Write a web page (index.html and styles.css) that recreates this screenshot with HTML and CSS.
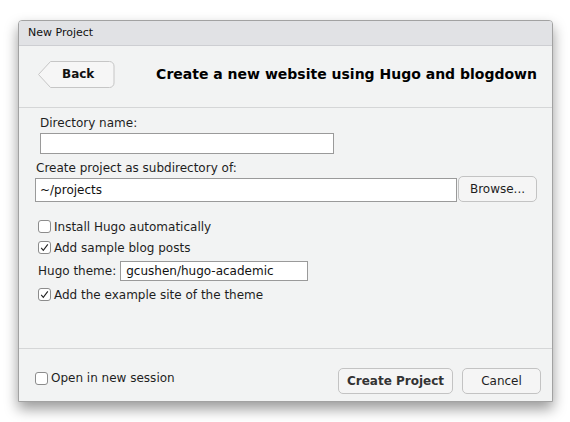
FILE: index.html
```html
<!DOCTYPE html>
<html>
<head>
<meta charset="utf-8">
<link rel="stylesheet" href="styles.css">
</head>
<body>
<div class="dialog">
  <div class="titlebar">New Project</div>
  <div class="header">
    <button class="back">
      <svg class="back-shape" width="77" height="27" viewBox="0 0 77 27"><path d="M12.5 0.5 H71.5 A4.5 4.5 0 0 1 76 5 V22 A4.5 4.5 0 0 1 71.5 26.5 H12.5 L0.5 13.5 Z" fill="#f6f6f6" stroke="#c6c6c6"/></svg>
      <span class="back-label">Back</span>
    </button>
    <h1 class="heading">Create a new website using Hugo and blogdown</h1>
  </div>
  <div class="form">
    <div class="dir-label">Directory name:</div>
    <div class="dir-input input"></div>
    <div class="sub-label">Create project as subdirectory of:</div>
    <div class="sub-row">
      <div class="sub-input input">~/projects</div>
      <button class="btn browse">Browse...</button>
    </div>
    <div class="check-row first"><span class="box"></span><span>Install Hugo automatically</span></div>
    <div class="check-row"><span class="box"><svg width="11" height="11" viewBox="0 0 11 11"><path d="M2.2 5.8 L4.3 8.3 L8.8 2.3" fill="none" stroke="#222" stroke-width="1.1"/></svg></span><span>Add sample blog posts</span></div>
    <div class="theme-row"><span class="theme-label">Hugo theme:</span><div class="theme-input input">gcushen/hugo-academic</div></div>
    <div class="check-row"><span class="box"><svg width="11" height="11" viewBox="0 0 11 11"><path d="M2.2 5.8 L4.3 8.3 L8.8 2.3" fill="none" stroke="#222" stroke-width="1.1"/></svg></span><span>Add the example site of the theme</span></div>
  </div>
  <div class="footer">
    <div class="check-row session"><span class="box"></span><span>Open in new session</span></div>
    <div class="footer-buttons">
      <button class="btn create">Create Project</button>
      <button class="btn cancel">Cancel</button>
    </div>
  </div>
</div>
</body>
</html>
```

FILE: styles.css
```css
* { box-sizing: border-box; }
html, body { height: 100%; }
body {
  margin: 0;
  min-height: 422px;
  padding-top: 20px;
  background: #ffffff;
  font-family: "DejaVu Sans", sans-serif;
  font-size: 12px;
  color: #1e1e1e;
}
.dialog {
  margin: 0 0 0 18px;
  width: 535px;
  height: 382px;
  border: 1px solid #a2a2a2;
  border-radius: 4px 4px 0 0;
  background: #f2f3f3;
  box-shadow: 0 7px 14px rgba(0,0,0,0.4);
  display: flex;
  flex-direction: column;
}
.titlebar {
  height: 25px;
  line-height: 24px;
  background: #e1e2e5;
  border-bottom: 1px solid #cdced2;
  border-radius: 3px 3px 0 0;
  padding-left: 9px;
  font-size: 11px;
  color: #111;
}
.header {
  height: 62px;
  border-bottom: 1px solid #d5d6d7;
  display: flex;
  align-items: flex-start;
  justify-content: space-between;
  padding: 15px 15px 0 19px;
}
.back {
  position: relative;
  width: 77px;
  height: 27px;
  padding: 0;
  border: none;
  background: transparent;
  font-family: inherit;
}
.back-shape { position: absolute; left: 0; top: 0; }
.back-label {
  position: absolute;
  left: 24px;
  top: 0;
  line-height: 27px;
  font-weight: bold;
  font-size: 12px;
  color: #111;
}
.heading {
  margin: 0;
  font-size: 14px;
  font-weight: bold;
  line-height: 27px;
  color: #000;
}
.form {
  height: 241px;
  border-bottom: 1px solid #d5d6d7;
  padding: 8px 0 0 0;
  display: flex;
  flex-direction: column;
  align-items: flex-start;
}
.input {
  background: #fff;
  border: 1px solid #9a9a9a;
  padding-left: 4px;
  font-size: 12px;
  color: #111;
}
.dir-label { line-height: 15px; margin-left: 21px; }
.dir-input { margin: 2px 0 0 21px; width: 294px; height: 21px; }
.sub-label { line-height: 15px; margin: 7px 0 0 17px; }
.sub-row {
  display: flex;
  align-items: flex-end;
  gap: 1px;
  margin-left: 16px;
}
.sub-input { width: 422px; height: 24px; line-height: 22px; }
.btn {
  background: #f5f5f5;
  border: 1px solid #c3c3c3;
  border-radius: 5px;
  font-family: inherit;
  font-size: 12px;
  color: #1e1e1e;
  padding: 0;
}
.browse { width: 79px; height: 26px; }
.check-row {
  display: flex;
  align-items: center;
  gap: 3px;
  height: 21px;
  margin-left: 19px;
}
.check-row.first { margin-top: 14px; }
.box {
  width: 13px;
  height: 13px;
  border: 1px solid #8c8c8c;
  border-radius: 3px;
  background: #fff;
  display: flex;
  align-items: center;
  justify-content: center;
}
.theme-row {
  display: flex;
  align-items: center;
  gap: 4px;
  margin: 3px 0 3px 19px;
}
.theme-input { width: 188px; height: 20px; line-height: 18px; padding-left: 5px; }
.footer {
  flex: 1;
  display: flex;
  justify-content: space-between;
  align-items: flex-start;
  padding: 19px 11px 0 16px;
}
.check-row.session { margin: 0; height: 20px; }
.footer-buttons { display: flex; gap: 9px; }
.create { width: 115px; height: 26px; font-weight: bold; color: #333; }
.cancel { width: 79px; height: 26px; }
```
